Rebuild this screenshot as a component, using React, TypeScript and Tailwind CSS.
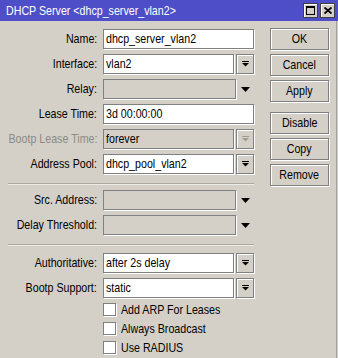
import React from "react";

const F = "font-['Liberation_Sans',sans-serif]";

function T({ children, origin = "left" }: { children: React.ReactNode; origin?: "left" | "right" | "center" }) {
  const o = origin === "left" ? "origin-left" : origin === "right" ? "origin-right" : "origin-center";
  return <span className={`inline-block shrink-0 whitespace-nowrap scale-x-[0.82] ${o}`}>{children}</span>;
}

function DropIcon({ disabled }: { disabled?: boolean }) {
  const c = disabled ? "#a09c94" : "#000";
  return (
    <svg width="7" height="6" viewBox="0 0 7 6" className="block">
      <rect x="0" y="0" width="7" height="1" fill={c} />
      <path d="M0 2 H7 L3.5 5.5 Z" fill={c} />
    </svg>
  );
}

function PlainArrow() {
  return (
    <svg width="9" height="5" viewBox="0 0 9 5" className="block">
      <path d="M0 0 H9 L4.5 5 Z" fill="#000" />
    </svg>
  );
}

function Field({ value, gray }: { value?: string; gray?: boolean }) {
  return (
    <div
      className={`h-[20px] flex-1 min-w-0 border border-[#808080] shadow-[1px_1px_0_#ffffff] pl-[2px] leading-[18px] text-[13px] text-black whitespace-nowrap overflow-hidden ${
        gray ? "bg-[#d4d0c8]" : "bg-white"
      }`}
    >
      {value && <T>{value}</T>}
    </div>
  );
}

function DropBtn({ disabled }: { disabled?: boolean }) {
  return (
    <div className="w-[18px] h-[20px] ml-[2px] shrink-0 border border-[#808080] shadow-[inset_1px_1px_0_#ffffff,1px_1px_0_#ffffff] bg-[#d4d0c8] flex items-center justify-center">
      <DropIcon disabled={disabled} />
    </div>
  );
}

type Kind = "full" | "drop" | "arrow";

function Row({
  label,
  value,
  kind,
  labelGray,
  fieldGray,
}: {
  label: string;
  value?: string;
  kind: Kind;
  labelGray?: boolean;
  fieldGray?: boolean;
}) {
  return (
    <div className="grid grid-cols-[89px_151px] gap-x-[6px] items-center h-[20px]">
      <div
        className={`flex justify-end text-[13px] leading-[20px] ${
          labelGray ? "text-[#8c8a84]" : "text-black"
        }`}
      >
        <T origin="right">{label}</T>
      </div>
      <div className="flex items-center h-[20px]">
        <Field value={value} gray={fieldGray || !value} />
        {kind === "drop" && <DropBtn disabled={fieldGray} />}
        {kind === "arrow" && (
          <div className="w-[18px] h-[20px] shrink-0 flex items-center justify-center">
            <PlainArrow />
          </div>
        )}
      </div>
    </div>
  );
}

function Sep() {
  return <div className="h-[2px] w-full border-t border-[#aca89f] border-b border-b-[#ecebe6]" />;
}

function Check({ label }: { label: string }) {
  return (
    <div className="flex items-center h-[19px] pl-[95px]">
      <div className="w-[13px] h-[13px] shrink-0 bg-white border border-[#808080] shadow-[1px_1px_0_#ffffff]" />
      <div className="ml-[5px] text-[13px] leading-[19px] text-black">
        <T>{label}</T>
      </div>
    </div>
  );
}

function Btn({ label, className = "" }: { label: string; className?: string }) {
  return (
    <div
      className={`w-[59px] h-[22px] border border-[#808080] shadow-[inset_1px_1px_0_#ffffff,1px_1px_0_#ffffff] bg-[#d4d0c8] flex items-center justify-center text-[13px] text-black ${className}`}
    >
      <T origin="center">{label}</T>
    </div>
  );
}

function TitleBtn({ children }: { children: React.ReactNode }) {
  return (
    <div className="w-[15px] h-[15px] bg-[#d4d0c8] border border-[#404040] shadow-[inset_1px_1px_0_#ffffff] flex items-center justify-center">
      {children}
    </div>
  );
}

export default function App() {
  return (
    <div className={`w-[338px] h-[358px] bg-[#d4d0c8] overflow-hidden ${F}`}>
      <div className="h-[21px] bg-[#4e4ec8] flex items-center pl-[6px] pr-[3px]">
        <div className="text-white text-[13px] leading-[21px] flex-1 min-w-0">
          <T>{"DHCP Server <dhcp_server_vlan2>"}</T>
        </div>
        <div className="flex gap-[2px]">
          <TitleBtn>
            <svg width="9" height="9" viewBox="0 0 9 9" className="block">
              <rect x="0.5" y="0.5" width="8" height="8" fill="none" stroke="#000" />
              <rect x="0" y="0" width="9" height="2" fill="#000" />
            </svg>
          </TitleBtn>
          <TitleBtn>
            <svg width="8" height="7" viewBox="0 0 8 7" className="block">
              <path d="M0.5 0.5 L7.5 6.5 M7.5 0.5 L0.5 6.5" stroke="#000" strokeWidth="1.8" />
            </svg>
          </TitleBtn>
        </div>
      </div>
      <div className="flex border-r border-[#a0a0a0] w-[337px] h-[337px]">
        <div className="pl-[8px] pt-[8px] w-[254px] flex flex-col">
          <div className="flex flex-col gap-[5px]">
            <Row label="Name:" value="dhcp_server_vlan2" kind="full" />
            <Row label="Interface:" value="vlan2" kind="drop" />
            <Row label="Relay:" kind="arrow" />
            <Row label="Lease Time:" value="3d 00:00:00" kind="full" />
            <Row label="Bootp Lease Time:" value="forever" kind="drop" labelGray fieldGray />
            <Row label="Address Pool:" value="dhcp_pool_vlan2" kind="drop" />
          </div>
          <div className="mt-[9px]">
            <Sep />
          </div>
          <div className="mt-[5px] flex flex-col gap-[5px]">
            <Row label="Src. Address:" kind="arrow" />
            <Row label="Delay Threshold:" kind="arrow" />
          </div>
          <div className="mt-[9px]">
            <Sep />
          </div>
          <div className="mt-[7px] flex flex-col gap-[5px]">
            <Row label="Authoritative:" value="after 2s delay" kind="drop" />
            <Row label="Bootp Support:" value="static" kind="drop" />
          </div>
          <div className="mt-[2px] flex flex-col">
            <Check label="Add ARP For Leases" />
            <Check label="Always Broadcast" />
            <Check label="Use RADIUS" />
          </div>
        </div>
        <div className="ml-[16px] pt-[7px] flex flex-col">
          <Btn label="OK" />
          <Btn label="Cancel" className="mt-[4px]" />
          <Btn label="Apply" className="mt-[4px]" />
          <Btn label="Disable" className="mt-[10px]" />
          <Btn label="Copy" className="mt-[4px]" />
          <Btn label="Remove" className="mt-[4px]" />
        </div>
      </div>
    </div>
  );
}
